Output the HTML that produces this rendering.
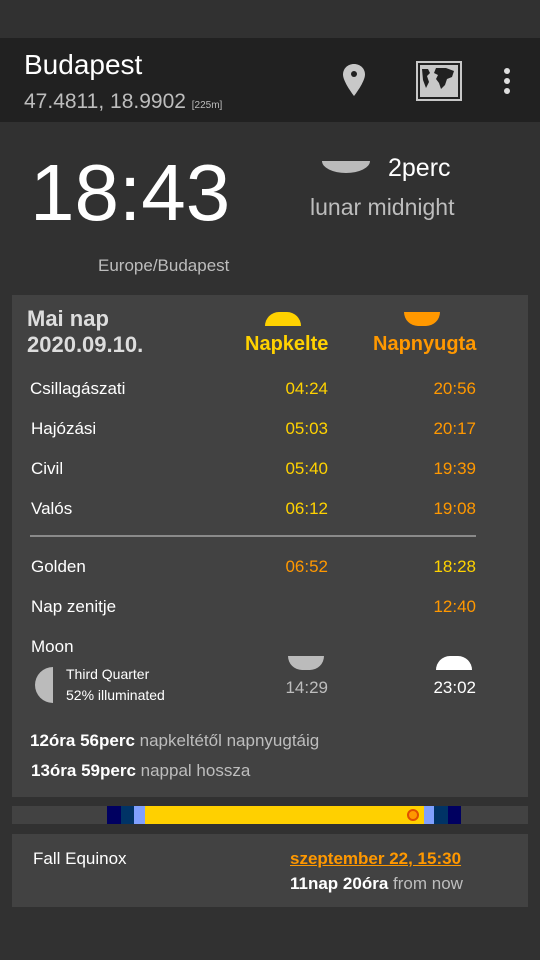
<!DOCTYPE html>
<html><head><meta charset="utf-8"><style>
*{margin:0;padding:0;box-sizing:border-box}
body{width:540px;height:960px;background:#313131;font-family:"Liberation Sans",sans-serif;position:relative;overflow:hidden;color:#fff}
.a{position:absolute;white-space:nowrap}
.r{text-align:right}
.y{color:#ffd200}.o{color:#ff9800}.g{color:#bdbdbd}
.row{font-size:17px}
</style></head><body>
<div class="a" style="left:0;top:38px;width:540px;height:84px;background:#212121"></div>
<div class="a" style="left:24px;top:49px;font-size:28px">Budapest</div>
<div class="a g" style="left:24px;top:90px;font-size:21px">47.4811, 18.9902 <span style="font-size:10px">[225m]</span></div>
<svg class="a" style="left:340px;top:62px" width="28" height="36" viewBox="0 0 28 36"><path d="M14 2C7.5 2 3 6.8 3 12.5 3 20 14 34 14 34S25 20 25 12.5C25 6.8 20.5 2 14 2z" fill="#c8c8c8"/><circle cx="14" cy="12" r="3" fill="#212121"/></svg>
<svg class="a" style="left:416px;top:61px" width="46" height="40" viewBox="0 0 46 40"><rect x="1" y="1" width="44" height="38" fill="none" stroke="#c8c8c8" stroke-width="2"/><rect x="4" y="4" width="38" height="32" fill="#c8c8c8"/><path d="M6 8h6l2 4-3 3 2 6-3 6-3-8zM20 7h10l8 3-2 6-5 2-2 6-4 4-2-6-3-4 2-4-4-2z" fill="#212121"/></svg>
<div class="a" style="left:504px;top:68px;width:6px;height:6px;border-radius:3px;background:#ddd"></div>
<div class="a" style="left:504px;top:78px;width:6px;height:6px;border-radius:3px;background:#ddd"></div>
<div class="a" style="left:504px;top:88px;width:6px;height:6px;border-radius:3px;background:#ddd"></div>

<div class="a" style="left:30px;top:148px;font-size:80px;line-height:90px">18:43</div>
<div class="a g" style="left:98px;top:256px;font-size:17px">Europe/Budapest</div>
<div class="a" style="left:322px;top:161px;width:48px;height:12px;background:#bbb;border-radius:0 0 24px 24px/0 0 12px 12px"></div>
<div class="a" style="left:388px;top:154px;font-size:25px">2perc</div>
<div class="a g" style="left:310px;top:194px;font-size:23px">lunar midnight</div>

<div class="a" style="left:12px;top:295px;width:516px;height:502px;background:#424242"></div>
<div class="a" style="left:27px;top:306px;font-size:22px;font-weight:bold;color:#ddd;line-height:26px">Mai nap<br>2020.09.10.</div>
<div class="a" style="left:265px;top:312px;width:36px;height:14px;background:#ffd200;border-radius:18px 18px 0 0"></div>
<div class="a" style="left:404px;top:312px;width:36px;height:14px;background:#ff9800;border-radius:0 0 18px 18px"></div>
<div class="a y" style="left:245px;top:333px;font-size:20px;font-weight:bold">Napkelte</div>
<div class="a o" style="left:373px;top:333px;font-size:20px;font-weight:bold">Napnyugta</div>

<div class="a row" style="left:30px;top:379px">Csillagászati</div>
<div class="a row" style="left:31px;top:419px">Hajózási</div>
<div class="a row" style="left:31px;top:459px">Civil</div>
<div class="a row" style="left:31px;top:499px">Valós</div>
<div class="a row r y" style="right:212px;top:379px">04:24</div>
<div class="a row r y" style="right:212px;top:419px">05:03</div>
<div class="a row r y" style="right:212px;top:459px">05:40</div>
<div class="a row r y" style="right:212px;top:499px">06:12</div>
<div class="a row r o" style="right:64px;top:379px">20:56</div>
<div class="a row r o" style="right:64px;top:419px">20:17</div>
<div class="a row r o" style="right:64px;top:459px">19:39</div>
<div class="a row r o" style="right:64px;top:499px">19:08</div>
<div class="a" style="left:30px;top:535px;width:446px;height:2px;background:#8a8a8a"></div>
<div class="a row" style="left:31px;top:557px">Golden</div>
<div class="a row" style="left:31px;top:597px">Nap zenitje</div>
<div class="a row r o" style="right:212px;top:557px">06:52</div>
<div class="a row r y" style="right:64px;top:557px">18:28</div>
<div class="a row r o" style="right:64px;top:597px">12:40</div>
<div class="a row" style="left:31px;top:637px">Moon</div>
<div class="a" style="left:35px;top:667px;width:18px;height:36px;background:#bbb;border-radius:18px 0 0 18px"></div>
<div class="a" style="left:66px;top:666px;font-size:14px">Third Quarter</div>
<div class="a" style="left:66px;top:687px;font-size:14px">52% illuminated</div>
<div class="a" style="left:288px;top:656px;width:36px;height:14px;background:#bbb;border-radius:0 0 18px 18px"></div>
<div class="a" style="left:436px;top:656px;width:36px;height:14px;background:#fff;border-radius:18px 18px 0 0"></div>
<div class="a row r g" style="right:212px;top:678px">14:29</div>
<div class="a row r" style="right:64px;top:678px">23:02</div>
<div class="a" style="left:30px;top:731px;font-size:17px"><b>12óra 56perc</b> <span class="g">napkeltétől napnyugtáig</span></div>
<div class="a" style="left:31px;top:761px;font-size:17px"><b>13óra 59perc</b> <span class="g">nappal hossza</span></div>

<div class="a" style="left:12px;top:806px;width:516px;height:18px;background:#424242"></div>
<div class="a" style="left:107px;top:806px;width:354px;height:18px;background:linear-gradient(90deg,#000060 0 14px,#003366 14px 27px,#80a0ff 27px 38px,#ffd000 38px 317px,#80a0ff 317px 327px,#003366 327px 341px,#000060 341px)"></div>
<div class="a" style="left:407px;top:809px;width:12px;height:12px;border-radius:6px;border:2px solid #e05000;background:#ff9800"></div>

<div class="a" style="left:12px;top:834px;width:516px;height:73px;background:#424242"></div>
<div class="a" style="left:33px;top:849px;font-size:17px">Fall Equinox</div>
<div class="a o" style="left:290px;top:849px;font-size:17px;font-weight:bold;text-decoration:underline">szeptember 22, 15:30</div>
<div class="a" style="left:290px;top:874px;font-size:17px"><b>11nap 20óra</b> <span class="g">from now</span></div>
</body></html>
